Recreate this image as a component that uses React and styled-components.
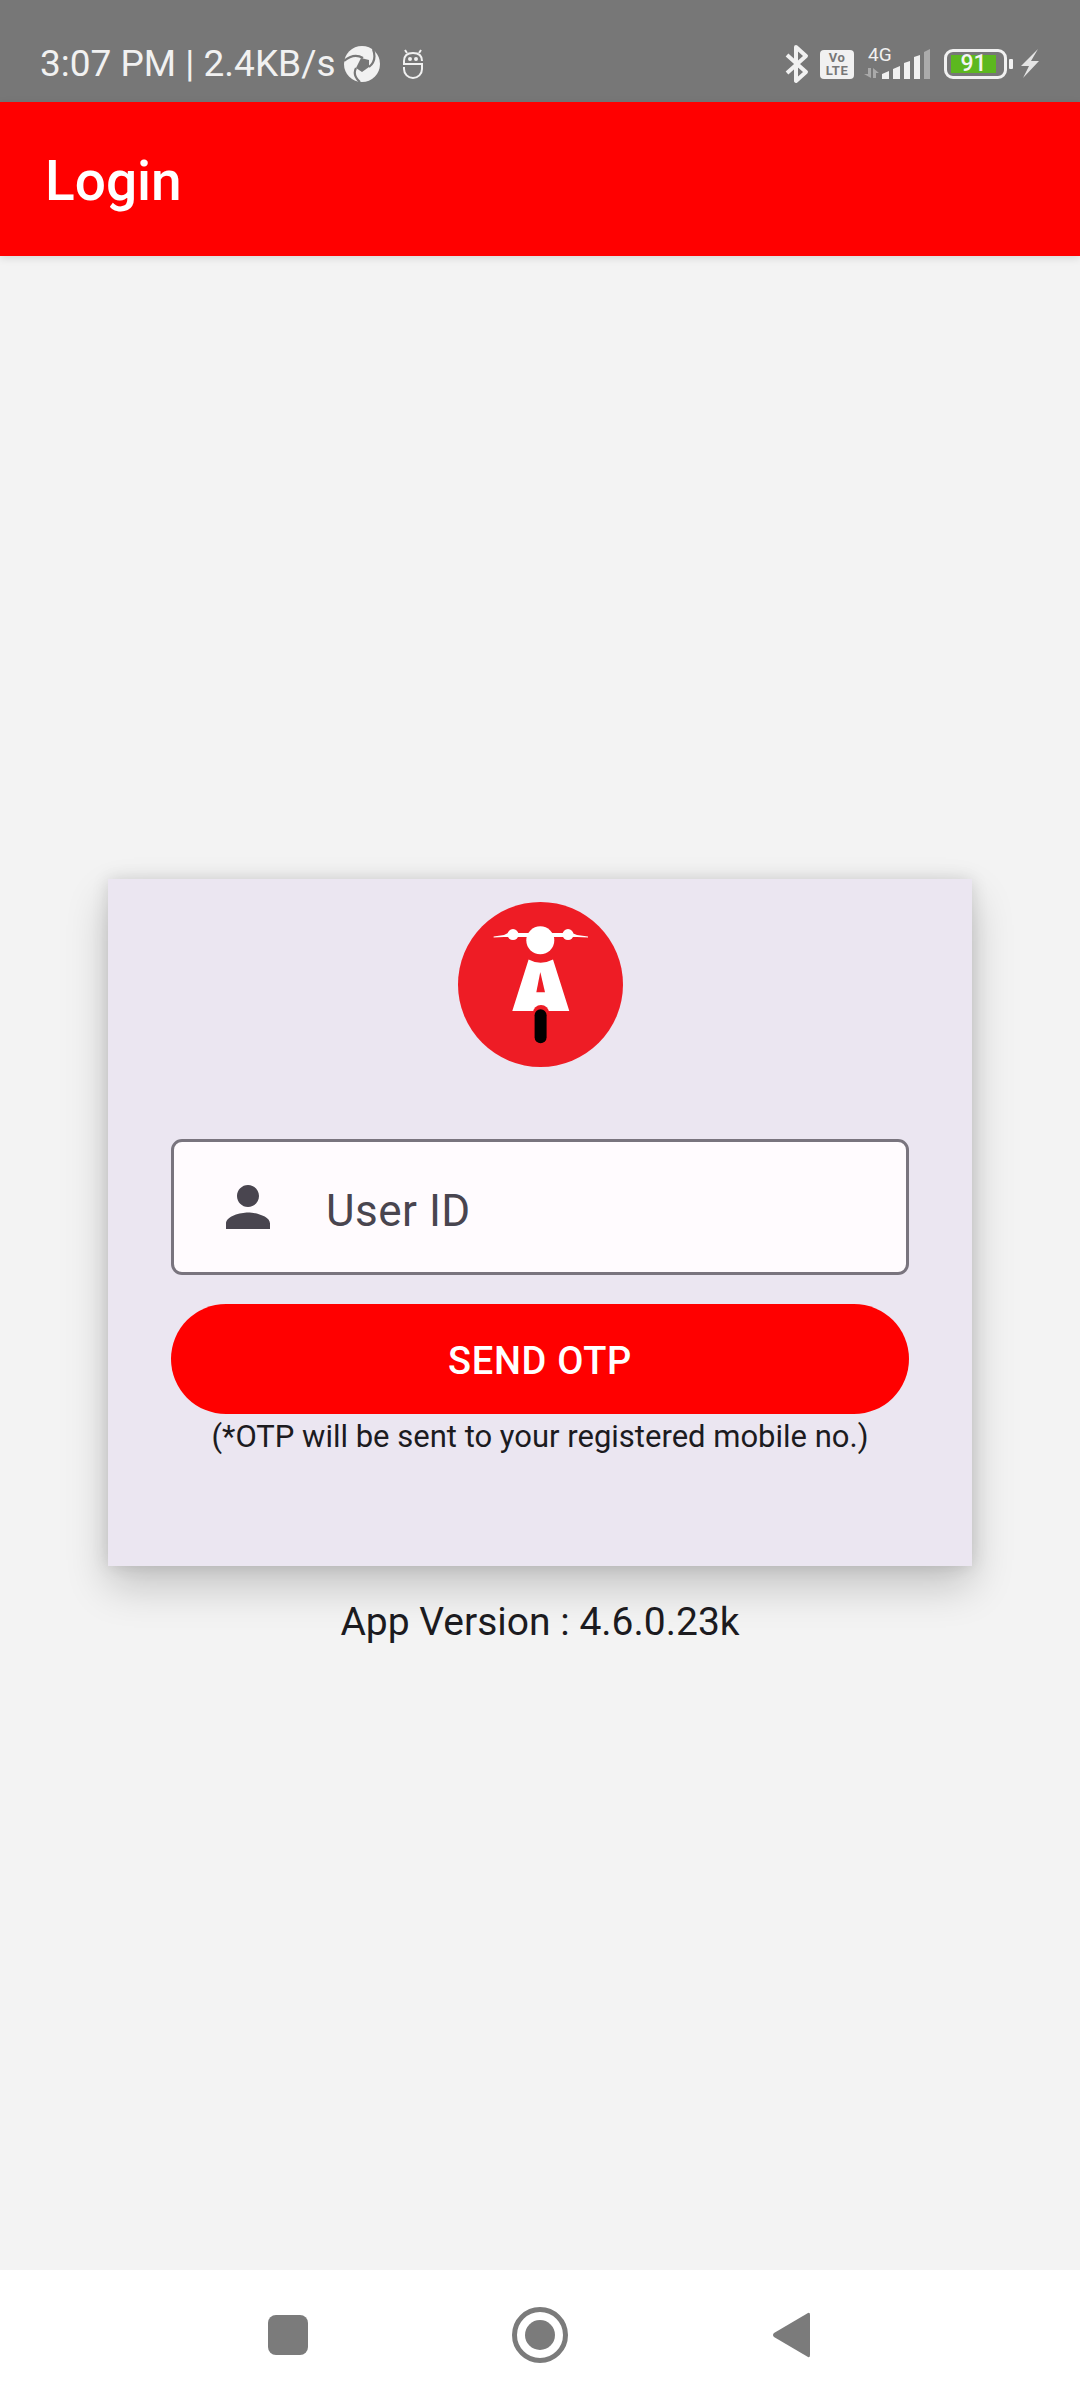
import React from "react"
import styled, { createGlobalStyle } from "styled-components"

const GlobalStyle = createGlobalStyle`
  html, body {
    margin: 0;
    padding: 0;
    background: #f3f3f3;
    font-family: Roboto, "Liberation Sans", sans-serif;
  }
`

const Screen = styled.div`
  width: 1080px;
  height: 2400px;
  display: flex;
  flex-direction: column;
  overflow: hidden;
`

const StatusBar = styled.div`
  height: 102px;
  flex: none;
  background: #777777;
  color: #f1f1f1;
  display: flex;
  justify-content: space-between;
  align-items: center;
  padding: 0 40px;
  box-sizing: border-box;
`

const StatusGroup = styled.div`
  display: flex;
  align-items: center;
  margin-top: 26px;
`

const Clock = styled.span`
  font-size: 37px;
  line-height: 44px;
  white-space: nowrap;
`

const VoLte = styled.div`
  width: 34px;
  height: 29px;
  margin-left: 11px;
  background: #f1f1f1;
  border-radius: 4px;
  color: #777777;
  font-size: 13px;
  font-weight: 700;
  line-height: 13px;
  letter-spacing: 0.5px;
  text-align: center;
  display: flex;
  flex-direction: column;
  justify-content: center;
`

const Signal = styled.div`
  position: relative;
  width: 67px;
  height: 30px;
  margin-left: 9px;
`

const NetLabel = styled.span`
  position: absolute;
  left: 5px;
  top: -5px;
  font-size: 19px;
  line-height: 22px;
`

const Battery = styled.div`
  width: 63px;
  height: 30px;
  margin-left: 14px;
  box-sizing: border-box;
  border: 3px solid #f1f1f1;
  border-radius: 9px;
  padding: 3px 8px 3px 4px;
  display: flex;
`

const BatteryFill = styled.div`
  flex: 1;
  background: #5cb81f;
  color: #f4f4f4;
  font-size: 23px;
  font-weight: 500;
  line-height: 18px;
  text-align: center;
`

const BatteryNub = styled.div`
  width: 4px;
  height: 10px;
  margin-left: 2px;
  background: #f1f1f1;
  border-radius: 1px;
`

const AppBar = styled.header`
  height: 154px;
  flex: none;
  box-sizing: border-box;
  background: #ff0000;
  color: #ffffff;
  font-size: 55px;
  font-weight: 500;
  display: flex;
  align-items: center;
  padding: 3px 0 0 45px;
  box-shadow: 0 2px 8px rgba(0, 0, 0, 0.12);
  position: relative;
`

const Main = styled.main`
  flex: 1;
  display: flex;
  flex-direction: column;
  align-items: center;
  padding-top: 623px;
`

const Card = styled.section`
  width: 864px;
  height: 687px;
  background: #ebe6f1;
  box-shadow: 0 20px 40px rgba(0, 0, 0, 0.2), 0 0 16px rgba(0, 0, 0, 0.12);
  display: flex;
  flex-direction: column;
  align-items: center;
  padding-top: 23px;
  box-sizing: border-box;
`

const Logo = styled.svg`
  width: 165px;
  height: 165px;
  display: block;
`

const Field = styled.div`
  width: 738px;
  height: 136px;
  margin-top: 72px;
  box-sizing: border-box;
  background: #fffbfe;
  border: 3px solid #79747e;
  border-radius: 11px;
  display: flex;
  align-items: center;
  padding-left: 41px;
  color: #49454f;
`

const FieldIcon = styled.svg`
  width: 66px;
  height: 66px;
  fill: #49454f;
  margin-right: 45px;
`

const FieldLabel = styled.span`
  font-size: 44px;
  letter-spacing: 0.5px;
  padding-top: 8px;
`

const SendButton = styled.button`
  width: 738px;
  height: 110px;
  margin-top: 29px;
  padding: 3px 0 0;
  border: 0;
  border-radius: 55px;
  background: #ff0000;
  color: #ffffff;
  font-family: Roboto, sans-serif;
  font-size: 38px;
  font-weight: 500;
  letter-spacing: 0.7px;
`

const Note = styled.p`
  margin: 1px 0 0;
  color: #1c1b1f;
  font-size: 31px;
  line-height: 44px;
`

const Version = styled.p`
  margin: 33px 0 0;
  color: #1c1b1f;
  font-size: 39px;
  line-height: 46px;
`

const NavBar = styled.nav`
  height: 130px;
  flex: none;
  background: #ffffff;
  display: flex;
  align-items: center;
  justify-content: center;
  gap: 204px;
  padding-left: 6px;
`

const NavIcon = styled.svg`
  width: ${(p) => p.$size}px;
  height: ${(p) => p.$size}px;
  fill: #7b7b7b;
`

const StatusIcon = styled.svg`
  width: ${(p) => p.$w}px;
  height: ${(p) => p.$h}px;
  margin-left: ${(p) => p.$ml || 0}px;
  flex: none;
  display: block;
`

const ScooterLogo = () => (
  <Logo viewBox="0 0 165 165">
    <circle cx="82.5" cy="82.5" r="82.5" fill="#ee1c25" />
    <path d="M35.6 34.5 L46 33 L50 31 H114 L119 33 L130 34.5 L130 35.5 L119 35 L114 35 H50 L46 35 L35.6 35.5 Z" fill="#fff" />
    <ellipse cx="55" cy="32.6" rx="5.5" ry="5.5" fill="#fff" />
    <ellipse cx="110" cy="32.6" rx="5.5" ry="5.5" fill="#fff" />
    <circle cx="82.3" cy="38.3" r="14" fill="#fff" />
    <path d="M70.6 57.5 Q82.5 64 95 57.5 L111.3 109 H54.3 Z" fill="#fff" />
    <path d="M82.3 70 L87 90.3 H78.3 Z" fill="#ee1c25" />
    <rect x="75" y="103" width="16" height="30" rx="8" fill="#ee1c25" />
    <rect x="76.6" y="107.3" width="12" height="34" rx="6" fill="#000" />
  </Logo>
)

const App = () => {
  return (
    <Screen>
      <GlobalStyle />
      <StatusBar>
        <StatusGroup>
          <Clock>3:07 PM | 2.4KB/s</Clock>
          <StatusIcon $w={36} $h={36} $ml={8} viewBox="0 0 36 36">
            <circle cx="18" cy="18" r="18" fill="#f1f1f1" />
            <path d="M0 15 C7 9 14 9 19 12 M29 3 C32 11 30 17 25 21 M16 36 C10 31 10 26 12 22" fill="none" stroke="#777" strokeWidth="2.2" />
            <path d="M17 12 L25 14 L25 21 L18 26 L12 22 Z" fill="#777" />
          </StatusIcon>
          <StatusIcon $w={22} $h={30} $ml={22} viewBox="0 0 22 30" fill="none" stroke="#f1f1f1" strokeWidth="2">
            <path d="M20 12 Q20 4 11 4 Q2 4 2 12 V15 H20 V20 A9 9 0 0 1 2 20 V18" />
            <path d="M3 1 L5 4 M19 1 L17 4" strokeWidth="2" />
            <circle cx="8" cy="10" r="1" fill="#f1f1f1" />
            <circle cx="14" cy="10" r="1" fill="#f1f1f1" />
          </StatusIcon>
        </StatusGroup>
        <StatusGroup>
          <StatusIcon $w={24} $h={40} viewBox="0 0 24 40" fill="none" stroke="#f1f1f1" strokeWidth="4" strokeLinejoin="round">
            <path d="M2 11 L21 28 L11 37 V3 L21 12 L2 29" />
          </StatusIcon>
          <VoLte>
            <span>Vo</span>
            <span>LTE</span>
          </VoLte>
          <Signal>
            <NetLabel>4G</NetLabel>
            <svg width="67" height="30" viewBox="0 0 67 30">
              <path d="M5 19 H8 V29 L1 25 H5 Z M10 19 L16 24 H13 V29 H10 Z" fill="#a9a9a9" />
              <path d="M19 30 V25 L26 22 V30 Z M30 30 V20 L37 17 V30 Z M41 30 V14 L47 12 V30 Z M51 30 V8 L57 6 V30 Z" fill="#f1f1f1" />
              <path d="M61 30 V3 L67 0 V30 Z" fill="#ababab" />
            </svg>
          </Signal>
          <Battery>
            <BatteryFill>91</BatteryFill>
          </Battery>
          <BatteryNub />
          <StatusIcon $w={19} $h={30} $ml={8} viewBox="0 0 19 30">
            <path d="M17 0 L0 17 H8 L2 29 L18 12 H10 Z" fill="#e4e4e4" />
          </StatusIcon>
        </StatusGroup>
      </StatusBar>
      <AppBar>Login</AppBar>
      <Main>
        <Card>
          <ScooterLogo />
          <Field>
            <FieldIcon viewBox="0 0 24 24">
              <path d="M12 12c2.21 0 4-1.79 4-4s-1.79-4-4-4-4 1.79-4 4 1.79 4 4 4zm0 2c-2.67 0-8 1.34-8 4v2h16v-2c0-2.66-5.33-4-8-4z" />
            </FieldIcon>
            <FieldLabel>User ID</FieldLabel>
          </Field>
          <SendButton>SEND OTP</SendButton>
          <Note>(*OTP will be sent to your registered mobile no.)</Note>
        </Card>
        <Version>App Version : 4.6.0.23k</Version>
      </Main>
      <NavBar>
        <NavIcon $size={40} viewBox="0 0 40 40">
          <rect width="40" height="40" rx="8" />
        </NavIcon>
        <NavIcon $size={56} viewBox="0 0 56 56">
          <circle cx="28" cy="28" r="25.5" fill="none" stroke="#7b7b7b" strokeWidth="5" />
          <circle cx="28" cy="28" r="15" />
        </NavIcon>
        <NavIcon $size={46} viewBox="0 0 46 46">
          <path d="M36 1 Q38 0 38 3 V43 Q38 46 36 45 L2 25 Q0 23 2 21 Z" />
        </NavIcon>
      </NavBar>
    </Screen>
  )
}

export default App
